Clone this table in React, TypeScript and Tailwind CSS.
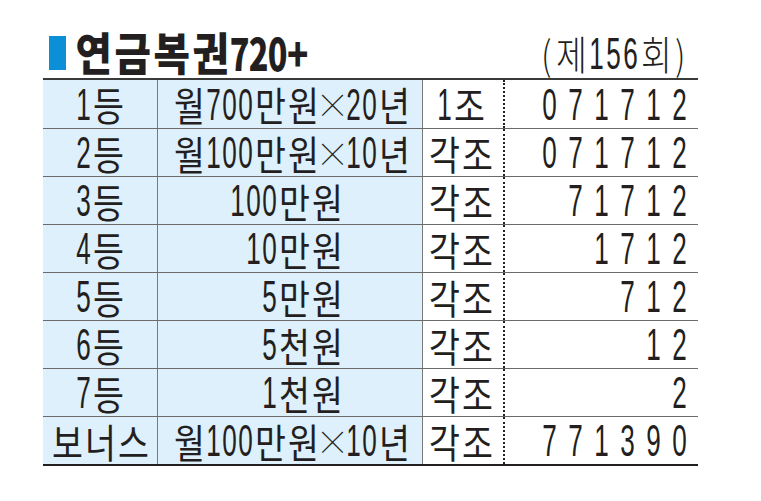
import React from "react";

type Kind = "d" | "h" | "x" | "p" | "b" | "s";
type Style = Record<Kind, [string, string, string]>;

const kindOf = (c: string): Kind => {
  if (/[0-9]/.test(c)) return "d";
  if (c === "+") return "p";
  if (c === "×") return "x";
  if (c === "(" || c === ")") return "b";
  if (c === " ") return "s";
  return "h";
};

const DIG = "font-['Liberation_Sans','Arial',sans-serif] text-[45px] font-normal";
const MUL = "font-['Noto_Sans_CJK_KR',sans-serif] text-[34px] font-thin";

const ROW: Style = {
  d: ["w-[16px]", "scale-x-[0.58]", DIG],
  h: ["w-[33px]", "scale-x-[0.84]", ""],
  x: ["w-[26px]", "scale-x-[1]", MUL],
  p: ["w-[18px]", "scale-x-[0.7]", ""],
  b: ["w-[14px]", "scale-x-[0.7]", ""],
  s: ["w-[8px]", "scale-x-[1]", ""],
};

const NUM: Style = {
  d: ["w-[26px]", "scale-x-[0.58]", DIG],
  h: ["w-[33px]", "scale-x-[0.84]", ""],
  x: ["w-[26px]", "scale-x-[1]", MUL],
  p: ["w-[18px]", "scale-x-[0.7]", ""],
  b: ["w-[14px]", "scale-x-[0.7]", ""],
  s: ["w-[8px]", "scale-x-[1]", ""],
};

const TITLE: Style = {
  d: ["w-[19px]", "scale-x-[0.72]", ""],
  h: ["w-[39px]", "scale-x-[0.88]", ""],
  x: ["w-[26px]", "scale-x-[0.9]", ""],
  p: ["w-[21px]", "scale-x-[0.78]", ""],
  b: ["w-[14px]", "scale-x-[0.7]", ""],
  s: ["w-[8px]", "scale-x-[1]", ""],
};

const SUB: Style = {
  d: ["w-[17px]", "scale-x-[0.58]", DIG],
  h: ["w-[34px]", "scale-x-[0.84]", ""],
  x: ["w-[26px]", "scale-x-[0.9]", ""],
  p: ["w-[18px]", "scale-x-[0.7]", ""],
  b: ["w-[15px]", "scale-x-[0.8]", ""],
  s: ["w-[8px]", "scale-x-[1]", ""],
};

function Glyphs({ text, st }: { text: string; st: Style }) {
  return (
    <span className="inline-flex items-center">
      {Array.from(text).map((c, i) => {
        const [w, sc, extra] = st[kindOf(c)];
        return (
          <span key={i} className={`inline-flex justify-center ${w}`}>
            <span className={`inline-block whitespace-pre ${sc} ${extra}`}>{c}</span>
          </span>
        );
      })}
    </span>
  );
}

type Row = { rank: string; prize: string; right: boolean; group: string; num: string };

const rows: Row[] = [
  { rank: "1등", prize: "월700만원×20년", right: false, group: "1조", num: "071712" },
  { rank: "2등", prize: "월100만원×10년", right: false, group: "각조", num: "071712" },
  { rank: "3등", prize: "100만원", right: true, group: "각조", num: "71712" },
  { rank: "4등", prize: "10만원", right: true, group: "각조", num: "1712" },
  { rank: "5등", prize: "5만원", right: true, group: "각조", num: "712" },
  { rank: "6등", prize: "5천원", right: true, group: "각조", num: "12" },
  { rank: "7등", prize: "1천원", right: true, group: "각조", num: "2" },
  { rank: "보너스", prize: "월100만원×10년", right: false, group: "각조", num: "771390" },
];

export default function App() {
  return (
    <div className="w-[761px] h-[501px] bg-white text-[#231f20] font-['Noto_Sans_CJK_KR','Noto_Sans',sans-serif] overflow-hidden">
      <div className="ml-[43px] pt-[30px] w-[655px]">
        {/* header */}
        <div className="flex items-center h-[48px] leading-none">
          <div className="ml-[6px] w-[17px] h-[34px] bg-[#0b8fd6] mt-[-2px]" />
          <div className="ml-[8px] text-[45px] font-black mt-[-6px]">
            <Glyphs text="연금복권720+" st={TITLE} />
          </div>
          <div className="ml-auto mr-[10px] text-[40px] font-light mt-[-2px]">
            <Glyphs text="(제156회)" st={SUB} />
          </div>
        </div>
        {/* table */}
        <div className="border-t-2 border-b-2 border-t-[#3a3a3a] border-b-[#231f20]">
          {rows.map((r, i) => (
            <div
              key={i}
              className={`flex h-[48px] text-[40px] leading-none ${i > 0 ? "border-t border-[#6b6b6b]" : ""}`}
            >
              <div className="w-[115px] bg-[#ddf0fb] border-r border-[#7a7a7a] flex items-center justify-center pl-[1px]">
                <Glyphs text={r.rank} st={ROW} />
              </div>
              <div
                className={`w-[265px] bg-[#ddf0fb] border-r border-[#7a7a7a] flex items-center ${
                  r.right ? "justify-end pr-[78px]" : "justify-center pl-[3px]"
                }`}
              >
                <Glyphs text={r.prize} st={ROW} />
              </div>
              <div className="w-[82px] border-r-2 border-dotted border-[#231f20] flex items-center justify-center pr-[4px]">
                <Glyphs text={r.group} st={ROW} />
              </div>
              <div className="flex-1 flex items-center justify-end pr-[5px]">
                <Glyphs text={r.num} st={NUM} />
              </div>
            </div>
          ))}
        </div>
      </div>
    </div>
  );
}
